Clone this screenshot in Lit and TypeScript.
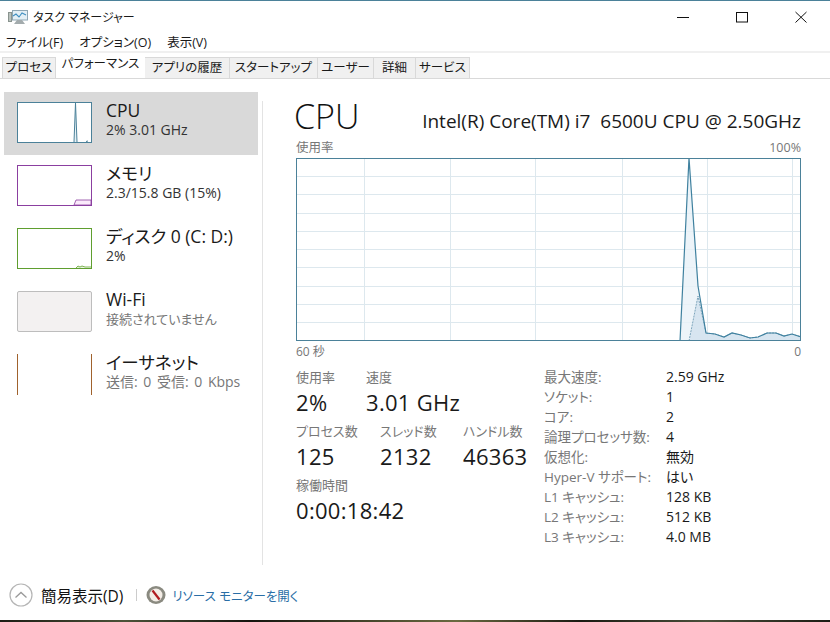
import { LitElement, html, css, svg } from "lit";
import { customElement } from "lit/decorators.js";

const tabs: [string, number][] = [
  ["プロセス", 54],
  ["パフォーマンス", 89],
  ["アプリの履歴", 85],
  ["スタートアップ", 88],
  ["ユーザー", 56],
  ["詳細", 42],
  ["サービス", 54],
];

const specs = [
  ["最大速度:", "2.59 GHz"],
  ["ソケット:", "1"],
  ["コア:", "2"],
  ["論理プロセッサ数:", "4"],
  ["仮想化:", "無効"],
  ["Hyper-V サポート:", "はい"],
  ["L1 キャッシュ:", "128 KB"],
  ["L2 キャッシュ:", "512 KB"],
  ["L3 キャッシュ:", "4.0 MB"],
];

const vLines = [68, 154, 239, 326, 411, 496];
const hLines = [18, 36, 55, 73, 91, 109, 128, 146, 164];

// usage line, in graph coordinates (graph is at 296,158 on the page)
const usage = "384,183 393,0 402,128 410,175 419,176 428,179 436,175 445,177 454,180 462,179 471,175 480,175 488,178 496,176 505,179";
const kernel = "393,183 402,138 410,175 419,176 428,179 436,175 445,177 454,180 462,179 471,175 480,175 488,178 496,176 505,179";

@customElement("app-root")
export class AppRoot extends LitElement {
  static styles = css`
    :host {
      display: block;
      width: 830px;
      height: 622px;
      overflow: hidden;
      background: #fff;
      color: #1a1a1a;
      font-family: "Open Sans", "Noto Sans CJK JP", sans-serif;
      font-feature-settings: "palt";
    }
    .window {
      display: flex;
      flex-direction: column;
      height: 622px;
      border-top: 1px solid #4b8199;
      box-sizing: border-box;
    }
    .titlebar {
      display: flex;
      align-items: center;
      height: 30px;
      box-sizing: border-box;
      padding: 1px 0 0 8px;
      flex: none;
      font-size: 12px;
      gap: 5px;
    }
    .winbtns {
      margin-left: auto;
      display: flex;
      align-items: center;
      gap: 47px;
      padding-right: 23px;
    }
    .menu {
      display: flex;
      align-items: center;
      height: 22px;
      box-sizing: border-box;
      flex: none;
      padding-left: 6px;
      gap: 16px;
      font-size: 12.5px;
      border-bottom: 2px solid #f0f0f0;
    }
    .tabs {
      display: flex;
      align-items: flex-end;
      height: 26px;
      flex: none;
      padding-left: 2px;
      border-bottom: 1px solid #d9d9d9;
      box-sizing: border-box;
    }
    .tab {
      height: 21px;
      line-height: 20px;
      text-align: center;
      font-size: 12.5px;
      background: #f0f0f0;
      border: 1px solid #d9d9d9;
      border-bottom: none;
      border-left: none;
      box-sizing: border-box;
      white-space: nowrap;
    }
    .tab:first-child {
      border-left: 1px solid #d9d9d9;
    }
    .tab.active {
      background: #fff;
      border: none;
      height: 24px;
      line-height: 20px;
    }
    .main {
      flex: 1;
      display: flex;
      min-height: 0;
    }
    .side {
      width: 258px;
      flex: none;
      padding: 13px 0 0 4px;
      box-sizing: border-box;
      display: flex;
      flex-direction: column;
    }
    .row {
      display: flex;
      align-items: center;
      height: 63px;
      flex: none;
      padding-left: 13px;
      gap: 14px;
    }
    .row.selected {
      background: #d9d9d9;
    }
    .row-text {
      margin-bottom: 10px;
    }
    .thumb {
      width: 75px;
      height: 41px;
      flex: none;
      box-sizing: border-box;
      border: 1px solid;
      background: #fff;
      display: block;
      margin-bottom: 2px;
    }
    .thumb.cpu { border-color: #4b8199; }
    .thumb.mem { border-color: #8b3fa0; }
    .thumb.disk { border-color: #5f9e2f; }
    .thumb.wifi { border-color: #bdbdbd; background: #f3f1f1; border-radius: 2px; }
    .thumb.eth { border-color: #a0622d; border-top: none; border-bottom: none; }
    .row-title {
      font-size: 17.5px;
      line-height: 22px;
    }
    .row-sub {
      font-size: 14px;
      line-height: 18px;
      color: #333;
    }
    .row-sub.muted {
      color: #777;
      word-spacing: 2px;
    }
    .row-sub.narrow { font-size: 13px; }
    .divider {
      width: 1px;
      margin: 22px 0 0 4px;
      background: #e3e3e3;
      flex: none;
    }
    .content {
      flex: 1;
      padding: 20px 0 0 33px;
      min-width: 0;
    }
    .head {
      display: flex;
      align-items: flex-end;
      justify-content: space-between;
      width: 505px;
      height: 36px;
    }
    .head h1 {
      margin: 0 0 1px -2px;
      font-size: 34px;
      font-weight: 300;
      line-height: 36px;
      color: #111;
    }
    .model {
      font-size: 19px;
      line-height: 24px;
      margin-bottom: 2px;
      white-space: pre;
    }
    .graph-label {
      display: flex;
      justify-content: space-between;
      width: 505px;
      height: 19px;
      margin-top: 4px;
      font-size: 12.5px;
      line-height: 17px;
      color: #777;
    }
    .graph {
      display: block;
      width: 505px;
      height: 183px;
    }
    .axis {
      display: flex;
      justify-content: space-between;
      width: 505px;
      font-size: 12px;
      line-height: 22px;
      color: #777;
    }
    .stats {
      display: flex;
      margin-top: 5px;
    }
    .left {
      width: 248px;
      flex: none;
    }
    .group {
      display: flex;
      margin-bottom: 4px;
    }
    .stat-label {
      font-size: 13px;
      line-height: 19px;
      color: #777;
    }
    .stat-value {
      font-size: 22px;
      line-height: 31px;
      letter-spacing: 0.3px;
    }
    .c-use { width: 70px; }
    .c-proc { width: 84px; }
    .c-thread { width: 83px; }
    .spec {
      display: grid;
      grid-template-columns: 122px auto;
      grid-auto-rows: 20px;
      margin-top: -1px;
      font-size: 13.5px;
      line-height: 20px;
    }
    .spec .k { color: #777; }
    .spec .v { font-size: 14px; }
    .footer {
      height: 55px;
      flex: none;
      box-sizing: border-box;
      display: flex;
      align-items: center;
      padding: 5px 0 0 9px;
      font-size: 15.5px;
      color: #111;
    }
    .footer .sep {
      width: 1px;
      height: 12px;
      background: #ccc;
      margin: 0 9px 0 13px;
    }
    .link {
      color: #2a6ea6;
      font-size: 12.5px;
      margin-left: 6px;
    }
    .less { margin-left: 8px; }
    .strip {
      height: 2px;
      flex: none;
      background: linear-gradient(90deg, #1c1c14, #4c5238 15%, #15150f 30%, #6a6a40 55%, #1a1a12 70%, #4a4f3a 85%, #1c1c14);
    }
  `;

  private thumbGraph(cls: string, inner: unknown = "") {
    return html`<svg class="thumb ${cls}" viewBox="0 0 73 39">${inner}</svg>`;
  }

  render() {
    return html`
      <div class="window">
        <div class="titlebar">
          <svg width="20" height="16" viewBox="0 0 20 16">
            <rect x="0.5" y="3.5" width="3" height="9" fill="#b9c2bd" stroke="#8a948f"></rect>
            <rect x="4.5" y="1.5" width="15" height="9.5" fill="#e3eff5" stroke="#8da6b3"></rect>
            <polyline points="5,7 8,5 11,8 14,4 18,6" fill="none" stroke="#3f8fc0" stroke-width="1.1"></polyline>
            <path d="M9 11h5l3 4H6z" fill="#a3abad"></path>
          </svg>
          <span>タスク マネージャー</span>
          <div class="winbtns">
            <svg width="12" height="12" viewBox="0 0 12 12"><line x1="0" y1="6.5" x2="12" y2="6.5" stroke="#111"></line></svg>
            <svg width="12" height="12" viewBox="0 0 12 12"><rect x="0.5" y="1.5" width="11" height="9.5" fill="none" stroke="#111"></rect></svg>
            <svg width="12" height="12" viewBox="0 0 12 12"><path d="M0.5 1L11.5 11.5M11.5 1L0.5 11.5" fill="none" stroke="#111"></path></svg>
          </div>
        </div>
        <div class="menu">
          <span>ファイル(F)</span><span>オプション(O)</span><span>表示(V)</span>
        </div>
        <div class="tabs">
          ${tabs.map(([t, w], i) => html`<div class="tab ${i === 1 ? "active" : ""}" style="width:${w}px">${t}</div>`)}
        </div>
        <div class="main">
          <div class="side">
            <div class="row selected">
              ${this.thumbGraph("cpu", svg`
                <polyline points="56,39 57.5,0 59,39" fill="#e6f1f6" stroke="#4b8199"></polyline>
                <line x1="68" y1="38.5" x2="70" y2="38" stroke="#4b8199"></line>`)}
              <div class="row-text"><div class="row-title">CPU</div><div class="row-sub">2% 3.01 GHz</div></div>
            </div>
            <div class="row">
              ${this.thumbGraph("mem", svg`<polygon points="56,39 58,34 73,34 73,39" fill="#fbeafb" stroke="#8b3fa0" stroke-width="0.8"></polygon>`)}
              <div class="row-text"><div class="row-title">メモリ</div><div class="row-sub">2.3/15.8 GB (15%)</div></div>
            </div>
            <div class="row">
              ${this.thumbGraph("disk", svg`<polyline points="58,39 60,37 62,38 64,37 67,38 70,38 73,38" fill="#dcefcf" stroke="#7fb356"></polyline>`)}
              <div class="row-text"><div class="row-title">ディスク 0 (C: D:)</div><div class="row-sub">2%</div></div>
            </div>
            <div class="row">
              <div class="thumb wifi"></div>
              <div class="row-text"><div class="row-title">Wi-Fi</div><div class="row-sub muted narrow">接続されていません</div></div>
            </div>
            <div class="row">
              <div class="thumb eth"></div>
              <div class="row-text"><div class="row-title">イーサネット</div><div class="row-sub muted">送信: 0 受信: 0 Kbps</div></div>
            </div>
          </div>
          <div class="divider"></div>
          <div class="content">
            <div class="head">
              <h1>CPU</h1>
              <div class="model">Intel(R) Core(TM) i7  6500U CPU @ 2.50GHz</div>
            </div>
            <div class="graph-label"><span>使用率</span><span>100%</span></div>
            <svg class="graph" viewBox="0 0 505 183">
              ${vLines.map((x) => svg`<line x1=${x + 0.5} y1="0" x2=${x + 0.5} y2="183" stroke="#dde8ee"></line>`)}
              ${hLines.map((y) => svg`<line x1="0" y1=${y + 0.5} x2="505" y2=${y + 0.5} stroke="#dde8ee"></line>`)}
              <polygon points=${usage + " 505,183"} fill="#e8f1f8" fill-opacity="0.8"></polygon>
              <polygon points=${kernel + " 505,183"} fill="#cfe0ec" fill-opacity="0.75"></polygon>
              <polyline points=${kernel} fill="none" stroke="#7fa6bd" stroke-dasharray="2 1"></polyline>
              <polyline points=${usage} fill="none" stroke="#3f819f" stroke-width="1.2"></polyline>
              <rect x="0.5" y="0.5" width="504" height="182" fill="none" stroke="#4b8199"></rect>
            </svg>
            <div class="axis"><span>60 秒</span><span>0</span></div>
            <div class="stats">
              <div class="left">
                <div class="group">
                  <div class="c-use"><div class="stat-label">使用率</div><div class="stat-value">2%</div></div>
                  <div><div class="stat-label">速度</div><div class="stat-value">3.01 GHz</div></div>
                </div>
                <div class="group">
                  <div class="c-proc"><div class="stat-label">プロセス数</div><div class="stat-value">125</div></div>
                  <div class="c-thread"><div class="stat-label">スレッド数</div><div class="stat-value">2132</div></div>
                  <div><div class="stat-label">ハンドル数</div><div class="stat-value">46363</div></div>
                </div>
                <div class="group">
                  <div><div class="stat-label">稼働時間</div><div class="stat-value">0:00:18:42</div></div>
                </div>
              </div>
              <div class="spec">
                ${specs.map(([k, v]) => html`<span class="k">${k}</span><span class="v">${v}</span>`)}
              </div>
            </div>
          </div>
        </div>
        <div class="footer">
          <svg width="24" height="24" viewBox="0 0 24 24">
            <circle cx="12" cy="12" r="11" fill="none" stroke="#b5b5b5" stroke-width="1.2"></circle>
            <path d="M6.5 14.5L12 9.5L17.5 14.5" fill="none" stroke="#9a9a9a" stroke-width="1.3"></path>
          </svg>
          <span class="less">簡易表示(D)</span>
          <div class="sep"></div>
          <svg width="20" height="20" viewBox="0 0 20 20">
            <ellipse cx="10" cy="10" rx="9.5" ry="9" fill="#8a8a80"></ellipse>
            <circle cx="10" cy="10" r="6.5" fill="#f3ede6"></circle>
            <path d="M6.5 5.5L13.5 14.5" stroke="#b01c20" stroke-width="2.2"></path>
          </svg>
          <span class="link">リソース モニターを開く</span>
        </div>
        <div class="strip"></div>
      </div>
    `;
  }
}
